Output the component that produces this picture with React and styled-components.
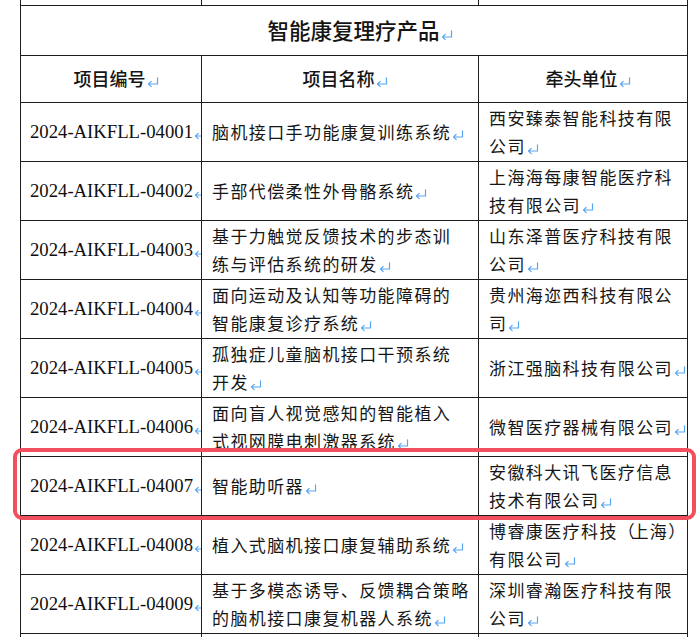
import React from 'react';
import styled, { createGlobalStyle, css } from 'styled-components';

const Global = createGlobalStyle`
  html, body { margin: 0; padding: 0; background: #fff; }
  body {
    font-family: "Noto Sans CJK SC", "Noto Sans", sans-serif;
    color: #161616;
  }
`;

const Page = styled.div`
  width: 700px;
  height: 637px;
  overflow: hidden;
  padding-left: 20px;
  box-sizing: border-box;
  background: #fff;
`;

const Table = styled.div`
  width: 668px;
  border-left: 1px solid #1e1e1e;
  display: flex;
  flex-direction: column;
`;

const Row = styled.div`
  display: grid;
  grid-template-columns: 181px 277px 209px;
  height: ${(p) => p.$h}px;
  flex: none;
  position: relative;
  ${(p) =>
    p.$highlight &&
    css`
      &::after {
        content: '';
        position: absolute;
        top: -9px;
        bottom: -4px;
        left: -8px;
        right: -7px;
        border: 4px solid #f3505f;
        border-radius: 9px;
        z-index: 2;
        pointer-events: none;
      }
    `}
`;

const Cell = styled.div`
  box-sizing: border-box;
  border-right: 1px solid #1e1e1e;
  border-bottom: ${(p) => (p.$open ? 'none' : '1px solid #1e1e1e')};
  display: flex;
  align-items: center;
  justify-content: ${(p) => (p.$center ? 'center' : 'flex-start')};
  padding-left: ${(p) => p.$pl ?? 10}px;
  overflow: hidden;
  ${(p) => p.$span && 'grid-column: 1 / -1;'}
`;

const Title = styled.div`
  font-size: 21.5px;
  font-weight: 500;
  white-space: nowrap;
  color: #141414;
  margin-top: -2px;
`;

const HeadText = styled.div`
  font-size: 18px;
  font-weight: 500;
  white-space: nowrap;
  color: #141414;
  margin-top: -2px;
`;

const Code = styled.div`
  font-family: "Liberation Serif", "Times New Roman", serif;
  font-size: 18.7px;
  white-space: nowrap;
  color: #0e0e0e;
`;

const Body = styled.div`
  font-size: 17px;
  letter-spacing: 1.4px;
  line-height: 28px;
  color: #161616;
`;

const Line = styled.span`
  display: block;
  white-space: nowrap;
`;

const Narrow = styled.span`
  letter-spacing: -3.4px;
`;

const MarkSvg = styled.svg`
  display: inline-block;
  width: 12px;
  height: 10px;
  margin-left: 1px;
  vertical-align: -1px;
  overflow: visible;
`;

const Mark = () => (
  <MarkSvg viewBox="0 0 12 10" aria-hidden="true">
    <path
      d="M10.5 0.8 V7 H1.5 M4.2 4.4 L1.5 7 L4.2 9.6"
      fill="none"
      stroke="#5aa6f2"
      strokeWidth="1.2"
      strokeLinecap="round"
      strokeLinejoin="round"
    />
  </MarkSvg>
);

const renderText = (t) =>
  t.split(/([（）])/).map((part, i) =>
    part === '（' || part === '）' ? <Narrow key={i}>{part}</Narrow> : part
  );

const MultiLine = ({ lines }) => (
  <Body>
    {lines.map((l, i) => (
      <Line key={i}>
        {renderText(l)}
        {i === lines.length - 1 && <Mark />}
      </Line>
    ))}
  </Body>
);

const rows = [
  { code: '2024-AIKFLL-04001', name: ['脑机接口手功能康复训练系统'], org: ['西安臻泰智能科技有限', '公司'] },
  { code: '2024-AIKFLL-04002', name: ['手部代偿柔性外骨骼系统'], org: ['上海海每康智能医疗科', '技有限公司'] },
  { code: '2024-AIKFLL-04003', name: ['基于力触觉反馈技术的步态训', '练与评估系统的研发'], org: ['山东泽普医疗科技有限', '公司'] },
  { code: '2024-AIKFLL-04004', name: ['面向运动及认知等功能障碍的', '智能康复诊疗系统'], org: ['贵州海迩西科技有限公', '司'] },
  { code: '2024-AIKFLL-04005', name: ['孤独症儿童脑机接口干预系统', '开发'], org: ['浙江强脑科技有限公司'] },
  { code: '2024-AIKFLL-04006', name: ['面向盲人视觉感知的智能植入', '式视网膜电刺激器系统'], org: ['微智医疗器械有限公司'] },
  { code: '2024-AIKFLL-04007', name: ['智能助听器'], org: ['安徽科大讯飞医疗信息', '技术有限公司'], highlight: true },
  { code: '2024-AIKFLL-04008', name: ['植入式脑机接口康复辅助系统'], org: ['博睿康医疗科技（上海）', '有限公司'] },
  { code: '2024-AIKFLL-04009', name: ['基于多模态诱导、反馈耦合策略', '的脑机接口康复机器人系统'], org: ['深圳睿瀚医疗科技有限', '公司'] },
];

export default function App() {
  return (
    <>
      <Global />
      <Page>
        <Table>
          <Row $h={6}>
            <Cell />
            <Cell />
            <Cell />
          </Row>
          <Row $h={50}>
            <Cell $span $center $pl={12}>
              <Title>
                智能康复理疗产品
                <Mark />
              </Title>
            </Cell>
          </Row>
          <Row $h={47}>
            <Cell $center>
              <HeadText>
                项目编号
                <Mark />
              </HeadText>
            </Cell>
            <Cell $center>
              <HeadText>
                项目名称
                <Mark />
              </HeadText>
            </Cell>
            <Cell $center>
              <HeadText>
                牵头单位
                <Mark />
              </HeadText>
            </Cell>
          </Row>
          {rows.map((r) => (
            <Row key={r.code} $h={59} $highlight={r.highlight}>
              <Cell $pl={9}>
                <Code>
                  {r.code}
                  <Mark />
                </Code>
              </Cell>
              <Cell>
                <MultiLine lines={r.name} />
              </Cell>
              <Cell>
                <MultiLine lines={r.org} />
              </Cell>
            </Row>
          ))}
          <Row $h={10}>
            <Cell $open />
            <Cell $open />
            <Cell $open />
          </Row>
        </Table>
      </Page>
    </>
  );
}
